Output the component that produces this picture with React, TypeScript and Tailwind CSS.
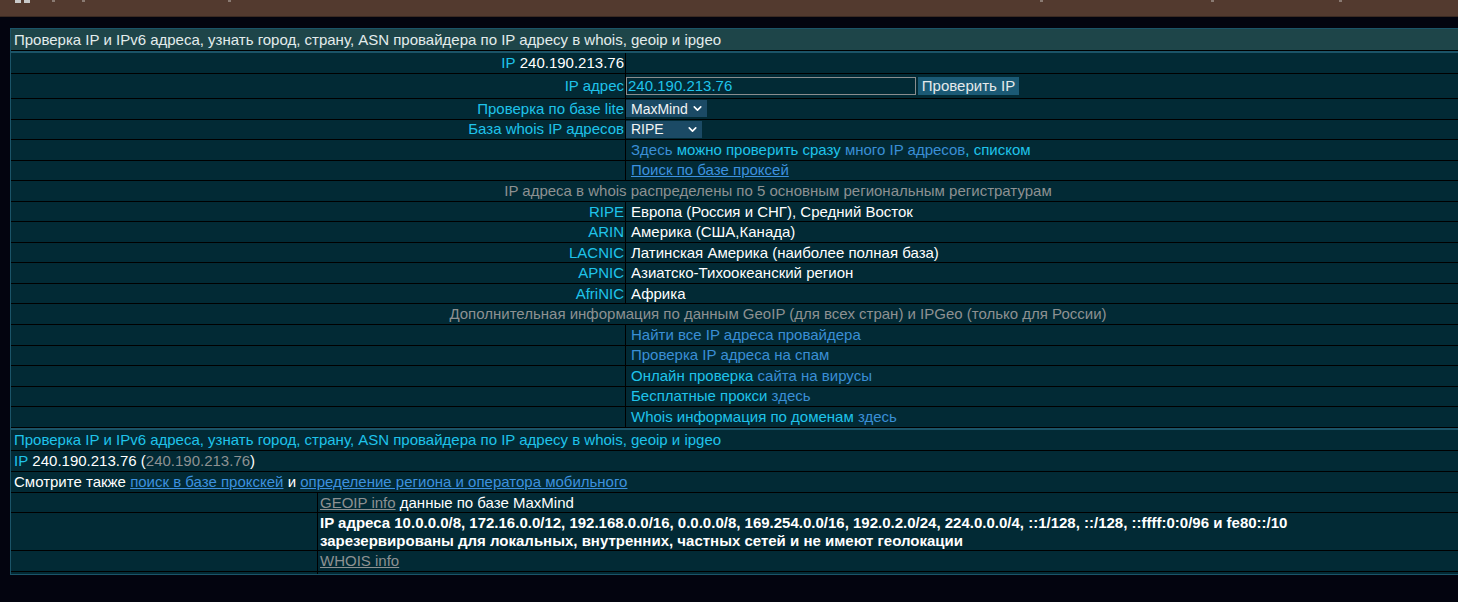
import React from "react";
import { ChevronDown } from "lucide-react";

const FONT = "font-['Liberation_Sans',Arial,sans-serif]";

const cyan = "text-[#1fc3ea]";
const blue = "text-[#3a8fd6]";
const grey = "text-[#8d9192]";

function Label({ children }: { children: React.ReactNode }) {
  return <div className="flex items-center justify-end pr-[1px] whitespace-nowrap">{children}</div>;
}

function Row({
  left,
  right,
  h = "h-[20.56px]",
  rightPad = "pl-[5px]",
}: {
  left?: React.ReactNode;
  right?: React.ReactNode;
  h?: string;
  rightPad?: string;
}) {
  return (
    <div className={`grid grid-cols-[614px_1fr] border-b border-black ${h}`}>
      <Label>{left}</Label>
      <div className={`flex items-center border-l border-black whitespace-nowrap ${rightPad}`}>{right}</div>
    </div>
  );
}

function Wide({ children, h = "h-[20.56px]" }: { children: React.ReactNode; h?: string }) {
  return (
    <div className={`flex items-center justify-center border-b border-black whitespace-nowrap ${h}`}>
      {children}
    </div>
  );
}

function Picker({ value, w }: { value: string; w: string }) {
  return (
    <div className={`relative flex h-[17px] items-center bg-[#1b4a65] ${w}`}>
      <select
        defaultValue={value}
        className={`h-full w-full appearance-none bg-transparent pl-[5px] text-[14px] leading-none text-[#f2f4f4] outline-none ${FONT}`}
      >
        <option>{value}</option>
      </select>
      <ChevronDown
        className="pointer-events-none absolute right-[3px] top-[2px] h-[13px] w-[13px] text-white"
        strokeWidth={3}
      />
    </div>
  );
}

const regions: [string, string][] = [
  ["RIPE", "Европа (Россия и СНГ), Средний Восток"],
  ["ARIN", "Америка (США,Канада)"],
  ["LACNIC", "Латинская Америка (наиболее полная база)"],
  ["APNIC", "Азиатско-Тихоокеанский регион"],
  ["AfriNIC", "Африка"],
];

export default function App() {
  return (
    <div className={`min-h-screen w-full overflow-hidden bg-[#03040f] text-[15px] leading-[18px] text-white ${FONT}`}>
      {/* browser-like strip at the very top */}
      <div className="relative h-[17px] border-b border-[#3b2a22] bg-[#533a2f]">
        <div className="absolute left-[15px] top-0 h-[3px] w-[6px] bg-[#c9c9c9]" />
        <div className="absolute left-[24px] top-0 h-[3px] w-[6px] bg-[#c9c9c9]" />
        <div className="absolute left-[52px] top-0 h-[2px] w-[3px] bg-[#8a7a72]" />
        <div className="absolute left-[82px] top-0 h-[2px] w-[3px] bg-[#8a7a72]" />
        <div className="absolute left-[228px] top-0 h-[2px] w-[3px] bg-[#8a7a72]" />
        <div className="absolute left-[1040px] top-0 h-[2px] w-[3px] bg-[#8a7a72]" />
        <div className="absolute left-[1211px] top-0 h-[2px] w-[3px] bg-[#8a7a72]" />
        <div className="absolute left-[1339px] top-0 h-[2px] w-[3px] bg-[#8a7a72]" />
      </div>

      <div className="ml-[10px] mt-[11px] w-[1536px]">
        {/* lookup form */}
        <div className="border border-[#1b5468] bg-[#02141b]">
          <div className="flex h-[22px] items-center border-b border-black bg-[#1e4549] pl-[3px] text-[#e3ecec]">
            Проверка IP и IPv6 адреса, узнать город, страну, ASN провайдера по IP адресу в whois, geoip и ipgeo
          </div>
          <div className="border-t-2 border-[#1b5468] bg-[#022a35]">
            <Row
              h="h-[21px]"
              left={
                <>
                  <span className={cyan}>IP</span>&nbsp;<span>240.190.213.76</span>
                </>
              }
            />
            <Row
              h="h-[25px]"
              rightPad="pl-0"
              left={<span className={cyan}>IP адрес</span>}
              right={
                <div className="flex items-center gap-[2px]">
                  <input
                    defaultValue="240.190.213.76"
                    className={`h-[18px] w-[290px] border border-[#8a8d8e] bg-transparent px-[1px] text-[15px] text-[#1fc3ea] outline-none ${FONT}`}
                  />
                  <button
                    className={`h-[18px] w-[101px] bg-[#1b5a75] text-[15px] leading-[18px] text-[#e6eaeb] ${FONT}`}
                  >
                    Проверить IP
                  </button>
                </div>
              }
            />
            <Row
              rightPad="pl-0"
              left={<span className={cyan}>Проверка по базе lite</span>}
              right={<Picker value="MaxMind" w="w-[81px]" />}
            />
            <Row
              rightPad="pl-0"
              left={<span className={cyan}>База whois IP адресов</span>}
              right={<Picker value="RIPE" w="w-[76px]" />}
            />
            <Row
              right={
                <>
                  <span className={blue}>Здесь</span>&nbsp;
                  <span className={cyan}>можно проверить сразу</span>&nbsp;
                  <span className={blue}>много IP адресов</span>
                  <span className={cyan}>, списком</span>
                </>
              }
            />
            <Row right={<span className="text-[#3d91df] underline">Поиск по базе проксей</span>} />
            <Wide>
              <span className={grey}>IP адреса в whois распределены по 5 основным региональным регистратурам</span>
            </Wide>
            {regions.map(([code, name]) => (
              <Row key={code} left={<span className={cyan}>{code}</span>} right={<span>{name}</span>} />
            ))}
            <Wide>
              <span className={grey}>
                Дополнительная информация по данным GeoIP (для всех стран) и IPGeo (только для России)
              </span>
            </Wide>
            <Row right={<span className={blue}>Найти все IP адреса провайдера</span>} />
            <Row right={<span className={blue}>Проверка IP адреса на спам</span>} />
            <Row
              right={
                <>
                  <span className={cyan}>Онлайн проверка</span>&nbsp;<span className={blue}>сайта на вирусы</span>
                </>
              }
            />
            <Row
              right={
                <>
                  <span className={cyan}>Бесплатные прокси</span>&nbsp;<span className={blue}>здесь</span>
                </>
              }
            />
            <Row
              right={
                <>
                  <span className={cyan}>Whois информация по доменам</span>&nbsp;<span className={blue}>здесь</span>
                </>
              }
            />
          </div>
        </div>

        {/* lookup result */}
        <div className="border border-[#1b5468] bg-[#022a35]">
          <div className={`flex h-[21px] items-center border-b border-black pl-[3px] ${cyan}`}>
            Проверка IP и IPv6 адреса, узнать город, страну, ASN провайдера по IP адресу в whois, geoip и ipgeo
          </div>
          <div className="flex h-[21px] items-center whitespace-pre border-b border-black pl-[3px]">
            <span className={cyan}>IP</span> 240.190.213.76 (<span className={grey}>240.190.213.76</span>)
          </div>
          <div className="flex h-[21px] items-center whitespace-pre border-b border-black pl-[3px]">
            Смотрите также <span className="text-[#3d91df] underline">поиск в базе прокскей</span> и{" "}
            <span className="text-[#3d91df] underline">определение региона и оператора мобильного</span>
          </div>
          <div className="grid grid-cols-[306px_1fr]">
            <div className="h-[20.5px] border-b border-black" />
            <div className="flex h-[20.5px] items-center whitespace-pre border-b border-l border-black pl-[2px]">
              <span className={`${grey} underline`}>GEOIP info</span> данные по базе MaxMind
            </div>
            <div className="border-b border-black" />
            <div className="flex h-[38px] flex-col justify-center border-b border-l border-black pl-[2px] font-bold">
              <div>
                IP адреса 10.0.0.0/8, 172.16.0.0/12, 192.168.0.0/16, 0.0.0.0/8, 169.254.0.0/16, 192.0.2.0/24,
                224.0.0.0/4, ::1/128, ::/128, ::ffff:0:0/96 и fe80::/10
              </div>
              <div>зарезервированы для локальных, внутренних, частных сетей и не имеют геолокации</div>
            </div>
            <div className="h-[20.5px] border-b border-black" />
            <div className="flex h-[20.5px] items-center border-b border-l border-black pl-[2px]">
              <span className={`${grey} underline`}>WHOIS info</span>
            </div>
            <div className="h-[2px]" />
            <div className="h-[2px] border-l border-black" />
          </div>
        </div>
      </div>
    </div>
  );
}
